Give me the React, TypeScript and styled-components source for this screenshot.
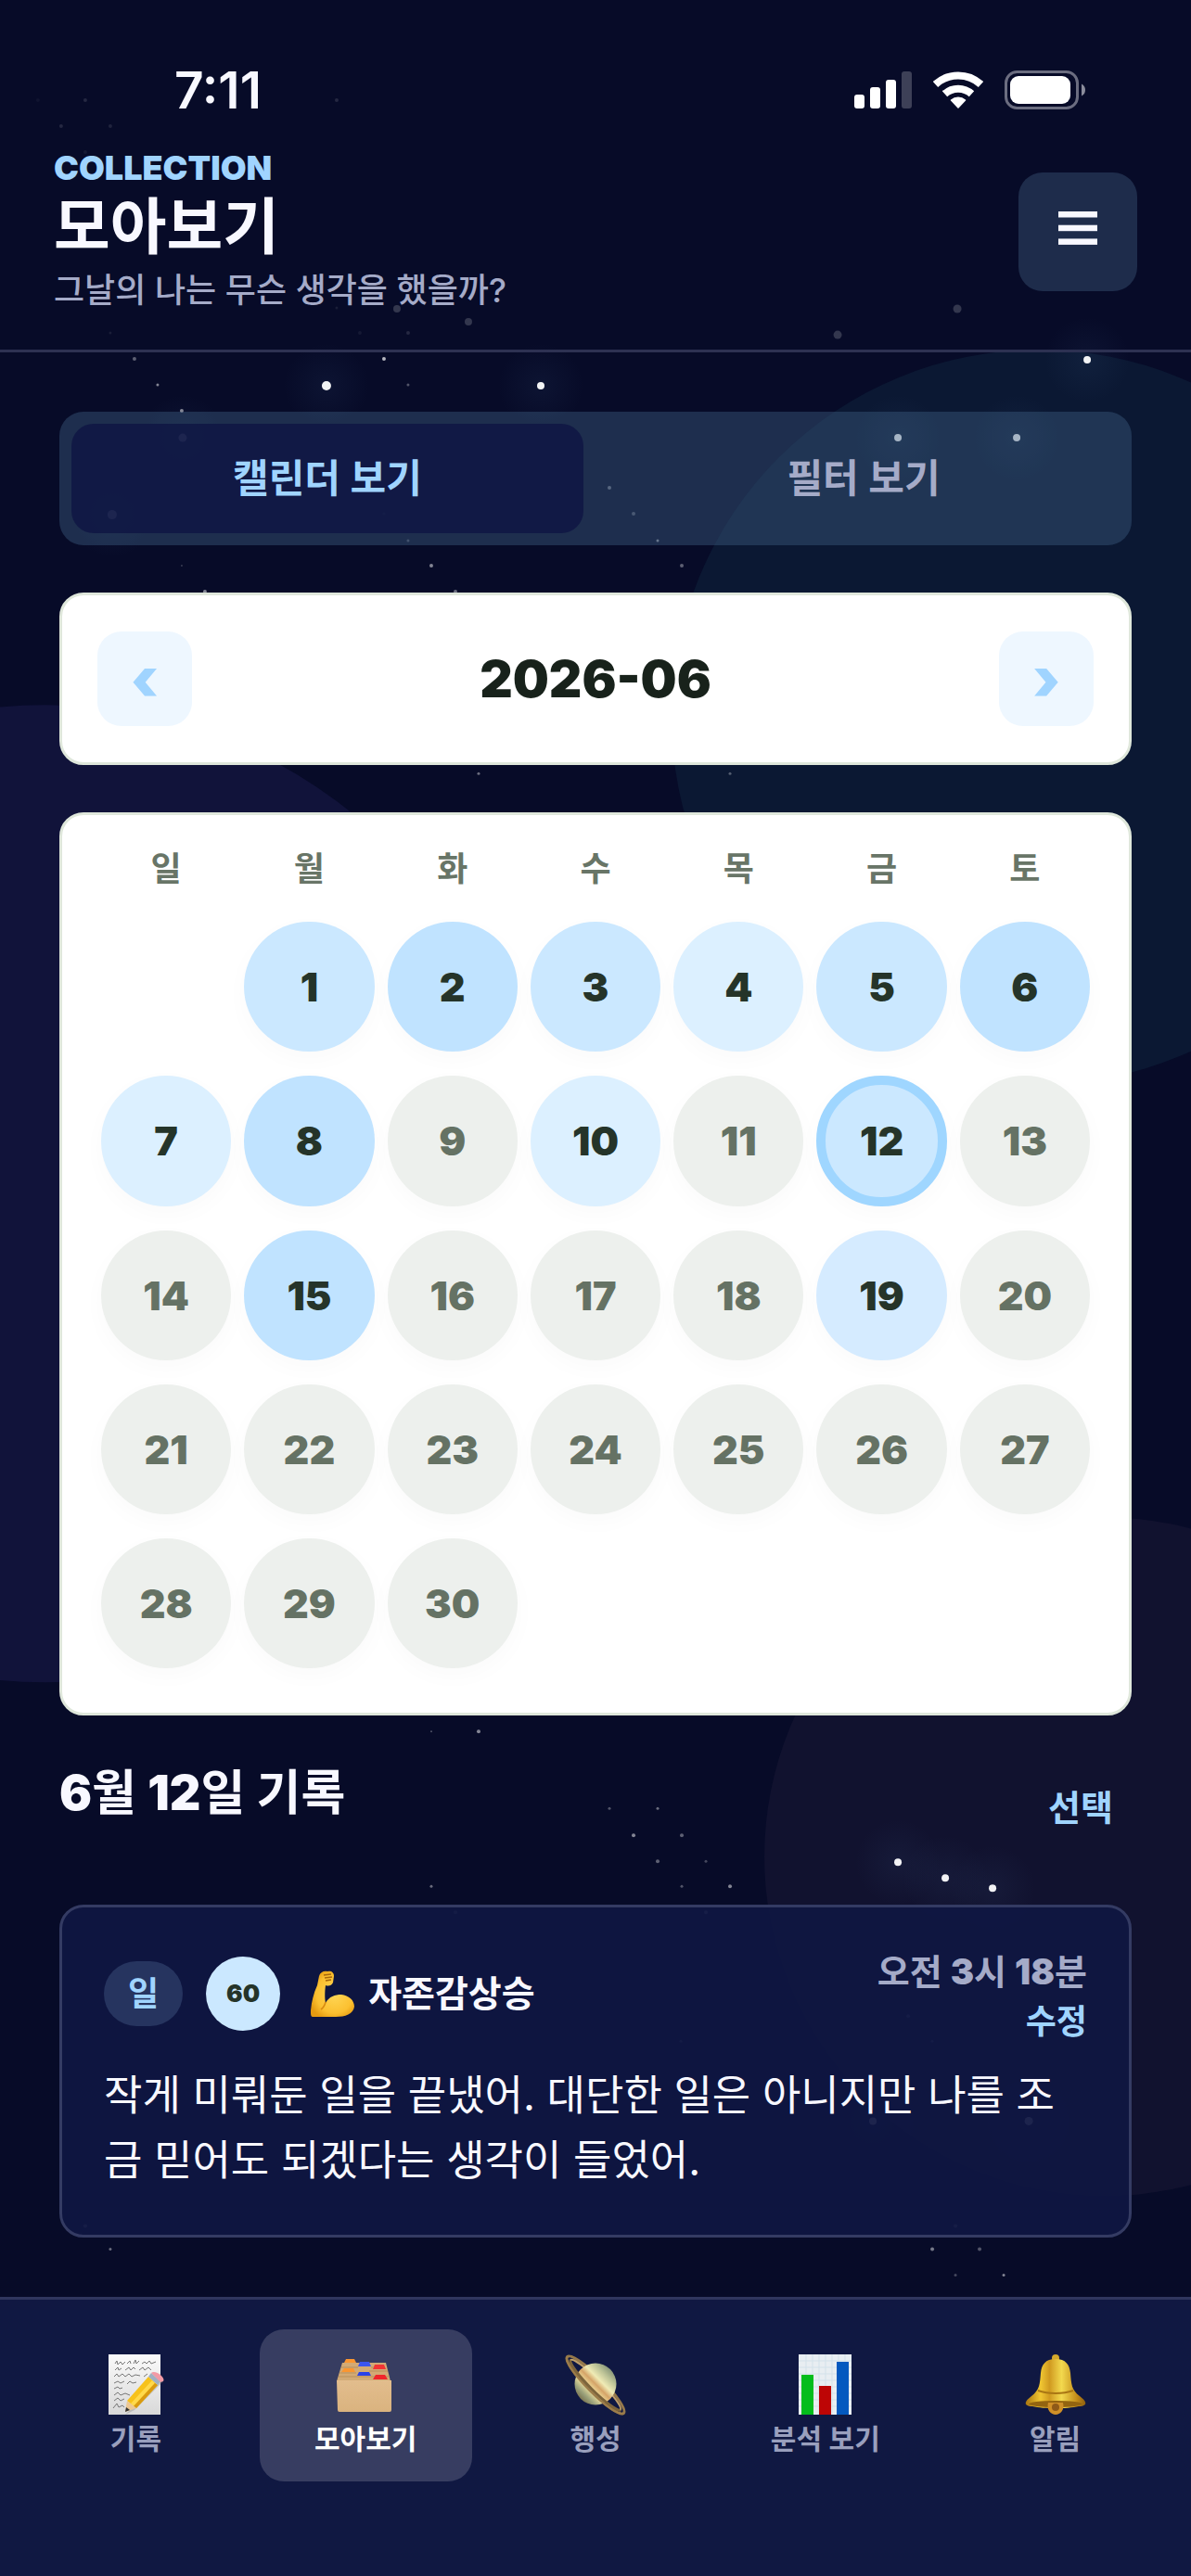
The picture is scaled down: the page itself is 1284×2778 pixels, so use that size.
import React, { useState } from "react";
import styled, { createGlobalStyle } from "styled-components";

const color = {
  night: "#070b28",
  panel: "#101842",
  line: "#2d3152",
  sky: "#a0d4ff",
  text: "#f8f8ff",
  muted: "#a5abc8",
  paperLine: "#dfe7db",
  ink: "#18221b",
};

const GlobalStyle = createGlobalStyle`
  *, *::before, *::after { box-sizing: border-box; }
  body {
    margin: 0;
    background: ${color.night};
    color: ${color.text};
    font-family: Inter, "Noto Sans CJK KR", sans-serif;
  }
  button {
    border: 0;
    padding: 0;
    background: none;
    color: inherit;
    font: inherit;
    cursor: pointer;
  }
  h1, h2, p { margin: 0; }
`;

const Screen = styled.div`
  position: relative;
  min-height: 100vh;
  display: flex;
  flex-direction: column;
  isolation: isolate;
`;

const SkyArt = styled.svg`
  position: absolute;
  inset: 0;
  z-index: -1;
  width: 100%;
  height: 100%;
`;

const StatusBar = styled.div`
  height: 160px;
  padding: 34px 113px 0 188px;
  display: flex;
  align-items: center;
  justify-content: space-between;
`;

const Clock = styled.time`
  font-size: 55px;
  line-height: 64px;
  font-weight: 600;
`;

const StatusIcons = styled.div`
  display: flex;
  align-items: center;
  gap: 23px;
  svg { display: block; }
`;

const Header = styled.header`
  padding: 0 58px 37px;
  border-bottom: 3px solid ${color.line};
  display: flex;
  align-items: center;
  justify-content: space-between;
`;

const Eyebrow = styled.p`
  color: ${color.sky};
  font-size: 36px;
  line-height: 42px;
  font-weight: 900;
`;

const Title = styled.h1`
  font-size: 66px;
  line-height: 84px;
  font-weight: 600;
`;

const Subtitle = styled.p`
  color: ${color.muted};
  font-size: 36px;
  line-height: 54px;
  font-weight: 500;
`;

const MenuButton = styled.button`
  width: 128px;
  height: 128px;
  padding-bottom: 8px;
  border-radius: 26px;
  background: #1e2c4b;
  display: grid;
  place-items: center;
`;

const Main = styled.main`
  flex: 1;
  padding: 64px;
  display: flex;
  flex-direction: column;
  gap: 51px;
`;

const Segments = styled.div`
  display: grid;
  grid-template-columns: 1fr 1fr;
  gap: 26px;
  padding: 13px;
  border-radius: 26px;
  background: rgba(61, 96, 130, 0.42);
`;

const Segment = styled.button<{ $active: boolean }>`
  height: 118px;
  border-radius: 24px;
  font-size: 42px;
  line-height: 60px;
  font-weight: 600;
  color: ${(p) => (p.$active ? color.sky : color.muted)};
  background: ${(p) => (p.$active ? "rgba(16, 24, 68, 0.92)" : "transparent")};
`;

const PaperCard = styled.section`
  border: 3px solid ${color.paperLine};
  border-radius: 26px;
  background: #fff;
`;

const MonthCard = styled(PaperCard)`
  padding: 39px 38px;
  display: flex;
  align-items: center;
  justify-content: space-between;
`;

const MonthTitle = styled.h2`
  color: ${color.ink};
  font-size: 55px;
  line-height: 64px;
  font-weight: 900;
`;

const StepButton = styled.button`
  width: 102px;
  height: 102px;
  border-radius: 26px;
  background: #eef7ff;
  color: ${color.sky};
  font-size: 64px;
  line-height: 64px;
  font-weight: 900;
`;

const CalendarCard = styled(PaperCard)`
  padding: 35px;
`;

const WeekGrid = styled.div`
  display: grid;
  grid-template-columns: repeat(7, 1fr);
`;

const Weekdays = styled(WeekGrid)`
  margin-bottom: 21px;
`;

const Weekday = styled.span`
  color: #687567;
  text-align: center;
  font-size: 36px;
  line-height: 46px;
  font-weight: 600;
`;

const DayCell = styled.div`
  padding: 13px 7px;
`;

const tones = ["#edf0ed", "#dcf0ff", "#d5ebff", "#cbe8ff", "#c0e3ff"];

const Day = styled.button<{ $tone: number; $selected: boolean }>`
  width: 100%;
  aspect-ratio: 1;
  border-radius: 50%;
  border: ${(p) => (p.$selected ? "10px solid #9fd6ff" : "0")};
  background: ${(p) => tones[p.$tone]};
  color: ${(p) => (p.$tone ? "#253429" : "#657264")};
  box-shadow: 0 8px 26px rgba(20, 30, 20, 0.025);
  font-size: 43px;
  line-height: 52px;
  font-weight: 900;
`;

const SectionHead = styled.div`
  min-height: 102px;
  display: flex;
  align-items: flex-start;
  justify-content: space-between;
`;

const SectionTitle = styled.h2`
  font-size: 52px;
  line-height: 66px;
  font-weight: 700;
`;

const Digits = styled.span`
  font-weight: 900;
`;

const SelectButton = styled.button`
  height: 96px;
  padding: 0 20px;
  color: ${color.sky};
  font-size: 38px;
  line-height: 48px;
  font-weight: 700;
`;

const Entry = styled.article`
  padding: 45px;
  border: 3px solid #343b63;
  border-radius: 26px;
  background: rgba(15, 22, 66, 0.94);
`;

const EntryHead = styled.div`
  margin-bottom: 21px;
  display: flex;
  align-items: flex-start;
  justify-content: space-between;
`;

const EntryTags = styled.div`
  min-height: 96px;
  display: flex;
  align-items: center;
`;

const Pill = styled.span`
  padding: 0 26px;
  border-radius: 35px;
  background: #26345f;
  color: ${color.sky};
  font-size: 36px;
  line-height: 70px;
  font-weight: 700;
`;

const Score = styled.span`
  width: 80px;
  height: 80px;
  margin: 0 32px 0 25px;
  border-radius: 50%;
  background: #cbe8ff;
  color: #253429;
  display: grid;
  place-items: center;
  font-size: 26px;
  line-height: 32px;
  font-weight: 900;
`;

const Feeling = styled.span`
  display: flex;
  align-items: center;
  gap: 13px;
  font-size: 39px;
  line-height: 48px;
  font-weight: 700;
`;

const EntryMeta = styled.div`
  display: flex;
  flex-direction: column;
  align-items: flex-end;
  gap: 6px;
  font-size: 38px;
  line-height: 48px;
`;

const EntryTime = styled.time`
  color: ${color.muted};
  font-weight: 700;
`;

const EditButton = styled.button`
  color: ${color.sky};
  font-size: 36px;
  line-height: 48px;
  font-weight: 700;
`;

const EntryText = styled.p`
  font-size: 45px;
  line-height: 70px;
  font-weight: 400;
`;

const TabBar = styled.nav`
  padding: 32px 32px 102px;
  border-top: 3px solid #30365e;
  background: ${color.panel};
  display: grid;
  grid-template-columns: repeat(5, 1fr);
  gap: 19px;
`;

const Tab = styled.button<{ $active: boolean }>`
  height: 164px;
  border-radius: 26px;
  background: ${(p) => (p.$active ? "#373d61" : "transparent")};
  color: ${(p) => (p.$active ? "#fff" : "#999fbd")};
  display: flex;
  flex-direction: column;
  align-items: center;
  justify-content: center;
  gap: 5px;
  font-size: 30px;
  line-height: 40px;
  font-weight: 600;
`;

/* x, y, radius, opacity */
const stars: [number, number, number, number][] = [
  [92, 108, 2, 0.12], [363, 108, 2, 0.12], [66, 136, 2, 0.12], [119, 136, 2, 0.1], [92, 164, 2, 0.06], [41, 108, 2, 0.04],
  [428, 333, 4, 0.18], [505, 347, 4, 0.18], [1032, 333, 4.5, 0.18], [903, 361, 4.5, 0.18],
  [440, 359, 2, 0.12], [388, 359, 2, 0.06], [119, 359, 1.5, 0.08], [363, 332, 1.5, 0.08],
  [145, 387, 2, 0.35], [414, 387, 2, 0.7], [1172, 388, 4, 0.95],
  [170, 415, 1.5, 0.5], [352, 416, 5, 0.95], [440, 415, 1.5, 0.3], [583, 416, 4, 0.95],
  [196, 443, 2, 0.5], [968, 472, 4, 0.95], [1096, 472, 4, 0.95], [197, 472, 4.5, 1], [121, 555, 5, 1],
  [657, 526, 2, 0.4], [683, 554, 2, 0.3], [440, 583, 1.5, 0.25], [709, 583, 1.5, 0.5], [414, 554, 1.5, 0.3],
  [465, 610, 2, 0.5], [735, 610, 2, 0.35], [196, 610, 1, 0.2], [221, 638, 2, 0.5], [491, 638, 2, 0.4],
  [516, 834, 1.5, 0.4], [787, 834, 1.5, 0.3],
  [516, 1867, 2, 0.5], [465, 1867, 1, 0.3],
  [657, 1950, 1.5, 0.3], [709, 1950, 1.5, 0.4], [683, 1979, 2, 0.5], [735, 1979, 2, 0.35],
  [709, 2007, 2, 0.35], [761, 2007, 1.5, 0.25], [787, 2034, 2, 0.5], [735, 2034, 1.5, 0.3], [465, 2034, 1.5, 0.4],
  [968, 2008, 4, 0.95], [1019, 2025, 4, 0.95], [1070, 2036, 4, 0.95],
  [941, 2287, 4, 1], [1109, 2287, 4.5, 1], [761, 2062, 2, 0.5], [491, 2062, 2, 0.4], [1030, 2400, 2, 0.5], [92, 2400, 2, 0.5],
  [979, 2174, 2, 0.4], [734, 2201, 1.5, 0.4], [1005, 2201, 1.5, 0.4],
  [119, 2425, 1.5, 0.4], [1005, 2425, 2, 0.45], [1056, 2425, 2, 0.3], [1030, 2453, 1.5, 0.25], [1082, 2453, 1.5, 0.5],
];

function Backdrop() {
  return (
    <SkyArt viewBox="0 0 1284 2778" preserveAspectRatio="xMidYMin slice" aria-hidden="true">
      <defs>
        <radialGradient id="glow">
          <stop offset="0" stopColor="#5b8ac0" stopOpacity="0.07" />
          <stop offset="1" stopColor="#5b8ac0" stopOpacity="0" />
        </radialGradient>
      </defs>
      <circle cx="1120" cy="773" r="396" fill="#0b1833" />
      <circle cx="49" cy="1287" r="527" fill="#11133a" />
      <circle cx="1190" cy="2002" r="366" fill="#11122f" />
      {stars.filter((s) => s[2] >= 4 && s[3] > 0.9).map(([x, y]) => (
        <circle key={`g${x}-${y}`} cx={x} cy={y} r="46" fill="url(#glow)" />
      ))}
      {stars.map(([x, y, r, o]) => (
        <circle key={`${x}-${y}`} cx={x} cy={y} r={r} fill="#fff" opacity={o} />
      ))}
    </SkyArt>
  );
}

const SignalIcon = () => (
  <svg width="62" height="40" viewBox="0 0 62 40" fill="#fff" aria-hidden="true">
    <rect x="0" y="25" width="11" height="15" rx="3" />
    <rect x="17" y="17" width="11" height="23" rx="3" />
    <rect x="34" y="9" width="11" height="31" rx="3" />
    <rect x="51" y="0" width="11" height="40" rx="3" opacity="0.22" />
  </svg>
);

const WifiIcon = () => (
  <svg width="54" height="40" viewBox="0 0 54 40" fill="none" stroke="#fff" strokeWidth="8" aria-hidden="true">
    <path d="M2.5 14 A36 36 0 0 1 51.5 14" />
    <path d="M12.5 24.3 A21.5 21.5 0 0 1 41.5 24.3" />
    <path d="M27 39 L19.5 31 A11.5 11.5 0 0 1 34.5 31 Z" fill="#fff" strokeWidth="1.5" strokeLinejoin="round" />
  </svg>
);

const BatteryIcon = () => (
  <svg width="88" height="42" viewBox="0 0 88 42" aria-hidden="true">
    <rect x="1.5" y="1.5" width="77" height="39" rx="12" fill="none" stroke="#6b6d80" strokeWidth="3" />
    <rect x="6" y="6" width="65" height="30" rx="9" fill="#fff" />
    <path d="M83 14.5 Q87 16.5 87 21 Q87 25.5 83 27.5 Z" fill="#8a8c9b" />
  </svg>
);

const MenuIcon = () => (
  <svg width="42" height="36" viewBox="0 0 42 36" fill={color.text} aria-hidden="true">
    <rect y="0" width="42" height="6.5" />
    <rect y="14.7" width="42" height="6.5" />
    <rect y="29.4" width="42" height="6.5" />
  </svg>
);

const MuscleIcon = () => (
  <svg width="50" height="52" viewBox="0 0 50 52" aria-hidden="true">
    <defs>
      <radialGradient id="arm" cx="0.55" cy="0.5" r="0.6">
        <stop offset="0" stopColor="#ffd757" />
        <stop offset="0.7" stopColor="#fcc030" />
        <stop offset="1" stopColor="#e59a10" />
      </radialGradient>
    </defs>
    <path
      d="M10 7 C11 3 15 1 19 2 C23 1 26 3 26 7 L25 14 C23 18 20 18 17 17 C16 24 16 32 17 36 C21 29 27 27 34 27 C42 28 48 33 48 40 C47 48 38 51 28 51 L3 51 C1 51 1 48 1 44 C2 34 4 26 8 17 Z"
      fill="url(#arm)"
    />
    <path d="M15 6 L23 5 M16 9 L24 8 M17 12 L23 11" stroke="#a8670c" strokeWidth="1.6" fill="none" />
    <path d="M17 35 C16 39 15 41 12 43" stroke="#d88a10" strokeWidth="1.6" fill="none" />
  </svg>
);

const NoteIcon = () => (
  <svg width="66" height="66" viewBox="0 0 66 66" aria-hidden="true">
    <defs>
      <linearGradient id="sheet" x1="0" y1="0" x2="0" y2="1">
        <stop offset="0" stopColor="#fafafa" />
        <stop offset="1" stopColor="#d9d9d9" />
      </linearGradient>
    </defs>
    <rect x="4" y="0" width="56" height="65" fill="url(#sheet)" />
    <g fill="none" stroke="#777" strokeWidth="1">
      <path d="M11 10 l2-3 1 4 3-3 2 3 3-3 M24 10 l3-3 1 3 M31 10 l2-4 1 4 3-3 M40 10 l3-2 2 2 3-3 2 3 5-2" />
      <path d="M11 17 l3-3 1 3 3-2 M22 17 l4-3 2 3 3-3 2 2 M37 17 l4-3 2 3 4-3 3 3" />
      <path d="M10 24 l3-3 2 3 4-3 3 3 4-3 3 3 4-2 5 1 M42 24 l4-3" />
      <path d="M10 31 l4-2 3 2 4-2 M24 32 l3-3 3 2 4-1" />
      <path d="M10 37 l4-2 2 2 3-1 M10 44 l4-3 3 3 5-2 5 2" />
      <path d="M10 50 l4-3 3 3 4-2 M9 58 l4-5 2 4 4-2 2 2" />
    </g>
    <path d="M27 60 L22 65 L32 60 L63 29 L60 27 Z" fill="#8c8c8c" opacity="0.4" />
    <path d="M24 50 L47 24 L57 33 L34 58 Z" fill="#f7c21a" />
    <path d="M28 53 L51 28 L54 31 L31 56 Z" fill="#ffd94a" />
    <path d="M31 56 L54 31 L57 33 L34 58 Z" fill="#d99a10" />
    <path d="M24 50 L34 58 L22 62 Z" fill="#ecc791" />
    <path d="M23 57 L27 60 L22 62 Z" fill="#333" />
    <path d="M47 24 L50 20 L60 29 L57 33 Z" fill="#9fb0c2" />
    <path d="M50 20 C54 16 66 25 63 29 L60 30 Z" fill="#f29aa5" />
  </svg>
);

const FolderIcon = () => (
  <svg width="66" height="66" viewBox="0 0 66 66" aria-hidden="true">
    <defs>
      <linearGradient id="folder" x1="0" y1="0" x2="0" y2="1">
        <stop offset="0" stopColor="#e2bd8d" />
        <stop offset="1" stopColor="#dab37f" />
      </linearGradient>
    </defs>
    <path d="M8 9 L55 9 L60 29 L2 29 Z" fill="#d2aa75" />
    <path d="M12 5 H21 L23 9 H10 Z" fill="#fb9630" />
    <path d="M27 8 H37 L39 13 H25 Z" fill="#3b56f0" />
    <path d="M43 11 H53 L55 16 H41 Z" fill="#f23434" />
    <path d="M7 14 H25 M39 14 H42 M5 20 H23 M37 18 H57 M4 24 H59" stroke="#b98f5b" strokeWidth="1" />
    <path d="M10 15 H20 L22 19 H7 Z" fill="#fb9630" />
    <path d="M26 19 H37 L39 23 H24 Z" fill="#2942e8" />
    <path d="M44 22 H54 L57 27 H41 Z" fill="#f0262b" />
    <path d="M2 28 H61 L61 60 Q61 62 59 62 H5 Q3 62 3 60 Z" fill="url(#folder)" />
  </svg>
);

const PlanetIcon = () => (
  <svg width="66" height="66" viewBox="0 0 66 66" aria-hidden="true">
    <defs>
      <linearGradient id="planet" x1="0.9" y1="0.1" x2="0.1" y2="0.9">
        <stop offset="0" stopColor="#76866f" />
        <stop offset="0.2" stopColor="#b9c095" />
        <stop offset="0.38" stopColor="#f0ebb5" />
        <stop offset="0.5" stopColor="#d5a468" />
        <stop offset="0.65" stopColor="#f1e3a0" />
        <stop offset="0.82" stopColor="#9aa17b" />
        <stop offset="1" stopColor="#6e6340" />
      </linearGradient>
    </defs>
    <g transform="rotate(45 33 33)" fill="none">
      <ellipse cx="33" cy="33" rx="43" ry="8.5" stroke="#96794b" strokeWidth="3" />
      <ellipse cx="33" cy="33" rx="38" ry="6" stroke="#c0a06b" strokeWidth="2" />
    </g>
    <circle cx="33" cy="32" r="22.5" fill="url(#planet)" />
    <g transform="rotate(45 33 33)" fill="none">
      <path d="M-10 33 A43 8.5 0 0 0 76 33" stroke="#9c7c4a" strokeWidth="2.5" />
      <path d="M-5 33 A38 6 0 0 0 71 33" stroke="#7c643b" strokeWidth="3" />
    </g>
  </svg>
);

const ChartIcon = () => (
  <svg width="66" height="66" viewBox="0 0 66 66" aria-hidden="true">
    <rect x="4" y="0" width="57" height="65" fill="#e8eef2" />
    <path
      d="M12 0V65 M19 0V65 M26 0V65 M33 0V65 M40 0V65 M47 0V65 M54 0V65 M4 7H61 M4 14H61 M4 21H61 M4 28H61 M4 35H61 M4 42H61 M4 49H61 M4 56H61"
      stroke="#d3e1ea"
      strokeWidth="1"
    />
    <rect x="7" y="22" width="13" height="43" fill="#04bd1c" />
    <rect x="26" y="34" width="13" height="31" fill="#bd0505" />
    <rect x="45" y="8" width="13" height="57" fill="#0459bf" />
  </svg>
);

const BellIcon = () => (
  <svg width="66" height="66" viewBox="0 0 66 66" aria-hidden="true">
    <defs>
      <linearGradient id="bell" x1="0" y1="0" x2="1" y2="0">
        <stop offset="0" stopColor="#a87510" />
        <stop offset="0.25" stopColor="#f0c632" />
        <stop offset="0.4" stopColor="#d09a20" />
        <stop offset="0.6" stopColor="#f3d94e" />
        <stop offset="0.85" stopColor="#c48d1a" />
        <stop offset="1" stopColor="#8d5e0e" />
      </linearGradient>
    </defs>
    <circle cx="33" cy="4" r="4" fill="#d5a92c" />
    <path
      d="M33 5 C44 5 48 11 49 20 C50 32 50 38 59 45 C64 49 66 51 65 54 C62 56 61 56 58 56 C45 59 21 59 8 56 C5 56 4 56 1 54 C0 51 2 49 7 45 C16 38 16 32 17 20 C18 11 22 5 33 5 Z"
      fill="url(#bell)"
    />
    <ellipse cx="33" cy="53.5" rx="29" ry="3.5" fill="#936410" />
    <path d="M14 39 C25 43 41 43 52 39" stroke="#a97614" strokeWidth="2" fill="none" />
    <path d="M25 52 H41 C43 60 38 65 33 65 C28 65 23 60 25 52 Z" fill="#cf8f27" />
    <circle cx="33" cy="57" r="4" fill="#8f5a18" />
  </svg>
);

const weekdays = ["일", "월", "화", "수", "목", "금", "토"];
const dayTone: Record<number, number> = { 1: 3, 2: 4, 3: 3, 4: 1, 5: 3, 6: 4, 7: 1, 8: 4, 10: 1, 12: 3, 15: 4, 19: 2 };
const firstWeekday = 1;
const days = Array.from({ length: 30 }, (_, i) => i + 1);

const tabs = [
  { label: "기록", Icon: NoteIcon },
  { label: "모아보기", Icon: FolderIcon },
  { label: "행성", Icon: PlanetIcon },
  { label: "분석 보기", Icon: ChartIcon },
  { label: "알림", Icon: BellIcon },
];

export default function App() {
  const [view, setView] = useState(0);
  const [selected, setSelected] = useState(12);
  const [tab, setTab] = useState(1);

  return (
    <Screen>
      <GlobalStyle />
      <Backdrop />
      <StatusBar>
        <Clock>7:11</Clock>
        <StatusIcons>
          <SignalIcon />
          <WifiIcon />
          <BatteryIcon />
        </StatusIcons>
      </StatusBar>
      <Header>
        <div>
          <Eyebrow>COLLECTION</Eyebrow>
          <Title>모아보기</Title>
          <Subtitle>그날의 나는 무슨 생각을 했을까?</Subtitle>
        </div>
        <MenuButton type="button" aria-label="메뉴">
          <MenuIcon />
        </MenuButton>
      </Header>
      <Main>
        <Segments>
          {["캘린더 보기", "필터 보기"].map((label, i) => (
            <Segment key={label} type="button" $active={view === i} aria-pressed={view === i} onClick={() => setView(i)}>
              {label}
            </Segment>
          ))}
        </Segments>
        <MonthCard>
          <StepButton type="button" aria-label="이전 달">‹</StepButton>
          <MonthTitle>2026-06</MonthTitle>
          <StepButton type="button" aria-label="다음 달">›</StepButton>
        </MonthCard>
        <CalendarCard>
          <Weekdays>
            {weekdays.map((name) => (
              <Weekday key={name}>{name}</Weekday>
            ))}
          </Weekdays>
          <WeekGrid>
            {Array.from({ length: firstWeekday }, (_, i) => (
              <DayCell key={`blank-${i}`} />
            ))}
            {days.map((day) => (
              <DayCell key={day}>
                <Day
                  type="button"
                  $tone={dayTone[day] ?? 0}
                  $selected={day === selected}
                  aria-pressed={day === selected}
                  onClick={() => setSelected(day)}
                >
                  {day}
                </Day>
              </DayCell>
            ))}
          </WeekGrid>
        </CalendarCard>
        <SectionHead>
          <SectionTitle>
            <Digits>6</Digits>월 <Digits>{selected}</Digits>일 기록
          </SectionTitle>
          <SelectButton type="button">선택</SelectButton>
        </SectionHead>
        <Entry>
          <EntryHead>
            <EntryTags>
              <Pill>일</Pill>
              <Score>60</Score>
              <Feeling>
                <MuscleIcon />
                자존감상승
              </Feeling>
            </EntryTags>
            <EntryMeta>
              <EntryTime>
                오전 <Digits>3</Digits>시 <Digits>18</Digits>분
              </EntryTime>
              <EditButton type="button">수정</EditButton>
            </EntryMeta>
          </EntryHead>
          <EntryText>작게 미뤄둔 일을 끝냈어. 대단한 일은 아니지만 나를 조금 믿어도 되겠다는 생각이 들었어.</EntryText>
        </Entry>
      </Main>
      <TabBar>
        {tabs.map(({ label, Icon }, i) => (
          <Tab key={label} type="button" $active={tab === i} onClick={() => setTab(i)}>
            <Icon />
            {label}
          </Tab>
        ))}
      </TabBar>
    </Screen>
  );
}
